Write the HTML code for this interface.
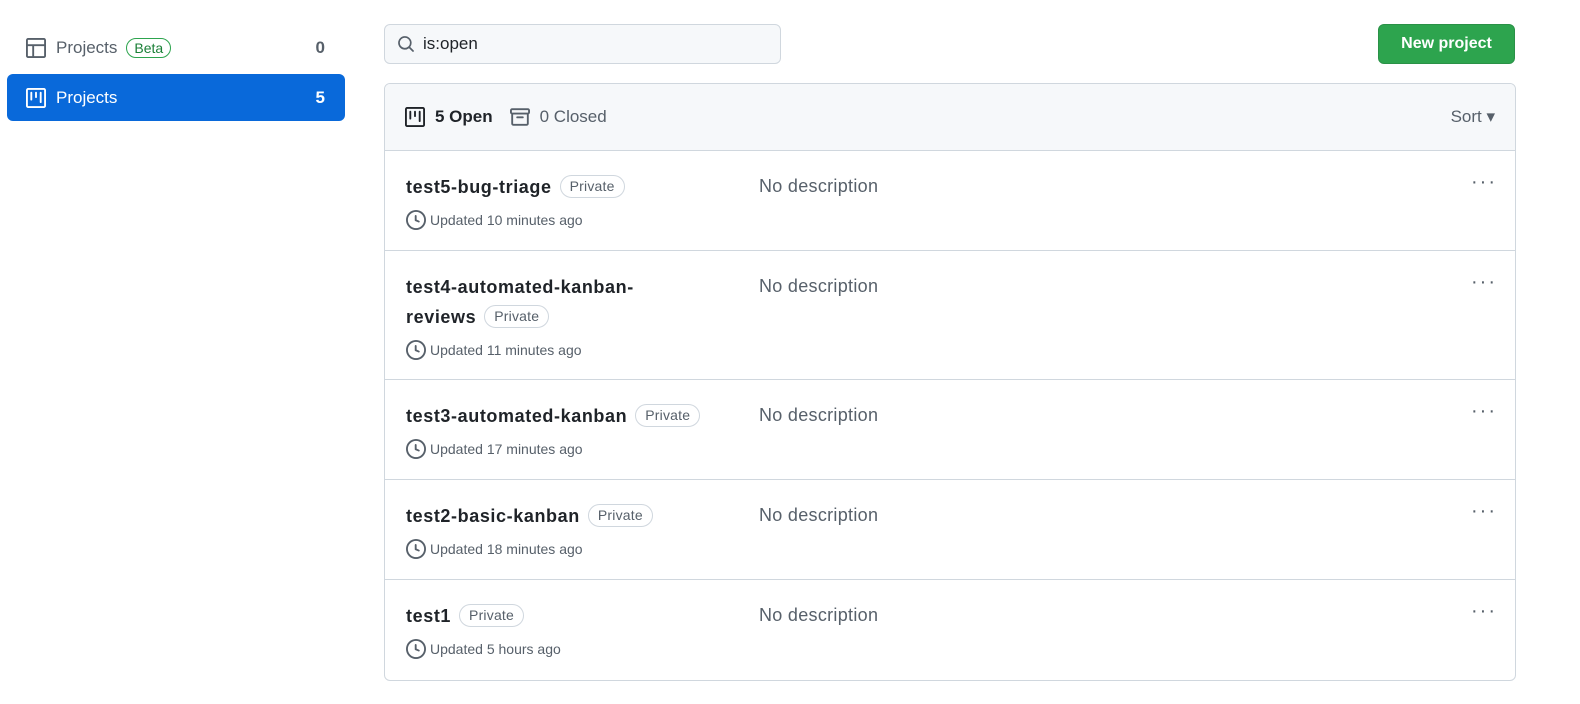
<!DOCTYPE html>
<html><head><style>
*{box-sizing:border-box;margin:0;padding:0}
body{width:1580px;height:704px;background:#fff;font-family:"Liberation Sans",sans-serif;color:#1f2328;position:relative;overflow:hidden}
.abs{position:absolute}
.side{left:7px;width:338px;height:47px;border-radius:6px;display:flex;align-items:center;padding-left:19px;font-size:17px}
.side .n{position:absolute;right:20px;font-weight:bold}
.beta{border:1px solid #2da44e;color:#1a7f37;border-radius:12px;font-size:14px;padding:1px 7px;margin-left:9px}
.search{left:384px;top:24px;width:397px;height:40px;border:1px solid #d0d7de;border-radius:6px;background:#f6f8fa;display:flex;align-items:center;padding-left:12px;font-size:17px;color:#1f2328}
.btn{left:1378px;top:24px;width:137px;height:40px;background:#2da44e;border:1px solid #2a9147;border-radius:6px;color:#fff;font-weight:bold;font-size:16px;display:flex;align-items:center;justify-content:center}
.box{left:384px;top:83px;width:1132px;height:598px;border:1px solid #d0d7de;border-radius:6px;overflow:hidden}
.hdr{height:67px;background:#f6f8fa;border-bottom:1px solid #d0d7de;display:flex;align-items:center;padding-left:20px;font-size:17px;position:relative}
.row{position:relative;border-bottom:1px solid #d0d7de}
.title{position:absolute;left:21px;font-size:18px;font-weight:bold;line-height:30px;width:340px;letter-spacing:0.6px}
.pv{display:inline-block;border:1px solid #d0d7de;border-radius:12px;font-size:14px;color:#57606a;padding:2px 9px;font-weight:normal;letter-spacing:0.2px;vertical-align:2px;margin-left:8px;line-height:17px}
.upd{position:absolute;left:21px;font-size:14px;color:#57606a;display:flex;align-items:center;gap:4px}
.desc{position:absolute;left:374px;font-size:18px;color:#57606a;letter-spacing:0.3px}
.dots{position:absolute;right:18px;font-size:20px;color:#57606a;letter-spacing:2px}
</style></head><body>
<div class="abs side" style="top:24px;color:#57606a">
<svg width="20" height="20" viewBox="0 0 16 16" fill="#57606a"><path d="M0 1.75C0 .78.78 0 1.750 0h12.5C15.22 0 16 .78 16 1.75v12.5A1.75 1.75 0 0 1 14.25 16H1.75A1.75 1.75 0 0 1 0 14.25ZM6.5 6.5v8h7.75a.25.25 0 0 0 .25-.25V6.5Zm8-1.5V1.75a.25.25 0 0 0-.25-.25H1.75a.25.25 0 0 0-.25.25V5Zm-13 1.5v7.750c0 .14.11.25.25.25H5v-8Z"/></svg>
<span style="margin-left:10px">Projects</span><span class="beta">Beta</span><span class="n" style="color:#57606a">0</span></div>
<div class="abs side" style="top:74px;background:#0969da;color:#fff">
<svg width="20" height="20" viewBox="0 0 16 16" fill="#fff"><path d="M1.75 0h12.5C15.22 0 16 .78 16 1.75v12.5A1.75 1.75 0 0 1 14.25 16H1.75A1.75 1.75 0 0 1 0 14.25V1.75C0 .78.78 0 1.75 0ZM1.5 1.75v12.5c0 .14.11.25.25.25h12.5a.25.25 0 0 0 .25-.25V1.75a.25.25 0 0 0-.25-.25H1.75a.25.25 0 0 0-.25.25ZM11.75 3a.75.75 0 0 1 .75.75v7.5a.75.75 0 0 1-1.5 0v-7.5a.75.75 0 0 1 .75-.75Zm-8.25.75a.75.75 0 0 1 1.5 0v5.5a.75.75 0 0 1-1.5 0ZM8 3a.75.75 0 0 1 .75.75v3.5a.75.75 0 0 1-1.5 0v-3.5A.75.75 0 0 1 8 3Z"/></svg>
<span style="margin-left:10px">Projects</span><span class="n">5</span></div>
<div class="abs search"><svg width="18" height="18" viewBox="0 0 16 16" fill="#57606a"><path d="M10.68 11.74a6 6 0 0 1-7.922-8.982 6 6 0 0 1 8.982 7.922l3.04 3.04a.749.749 0 1 1-1.06 1.06ZM11.5 7a4.499 4.499 0 1 0-8.997 0A4.499 4.499 0 0 0 11.5 7Z"/></svg><span style="margin-left:8px">is:open</span></div>
<div class="abs btn">New project</div>
<div class="abs box">
<div class="hdr">
<svg width="20" height="20" viewBox="0 0 16 16" fill="#1f2328"><path d="M1.75 0h12.5C15.22 0 16 .78 16 1.75v12.5A1.75 1.75 0 0 1 14.25 16H1.75A1.75 1.75 0 0 1 0 14.25V1.75C0 .78.78 0 1.75 0ZM1.5 1.75v12.5c0 .14.11.25.25.25h12.5a.25.25 0 0 0 .25-.25V1.75a.25.25 0 0 0-.25-.25H1.75a.25.25 0 0 0-.25.25ZM11.75 3a.75.75 0 0 1 .75.75v7.5a.75.75 0 0 1-1.5 0v-7.5a.75.75 0 0 1 .75-.75Zm-8.25.75a.75.75 0 0 1 1.5 0v5.5a.75.75 0 0 1-1.5 0ZM8 3a.75.75 0 0 1 .75.75v3.5a.75.75 0 0 1-1.5 0v-3.5A.75.75 0 0 1 8 3Z"/></svg>
<b style="margin-left:10px">5 Open</b>
<svg style="margin-left:17px" width="20" height="20" viewBox="0 0 16 16" fill="#57606a"><path d="M0 2.75C0 1.784.784 1 1.75 1h12.5c.966 0 1.75.784 1.75 1.75v1.5A1.75 1.75 0 0 1 15 5.826v7.424A1.75 1.75 0 0 1 13.25 15H2.75A1.75 1.75 0 0 1 1 13.25V5.826A1.75 1.75 0 0 1 0 4.25ZM2.5 5.95v7.3c0 .138.112.25.25.25h10.5a.25.25 0 0 0 .25-.25v-7.3ZM14.25 4.5a.25.25 0 0 0 .25-.25v-1.5a.25.25 0 0 0-.25-.25H1.75a.25.25 0 0 0-.25.25v1.5c0 .138.112.25.25.25Zm-8.5 3h4.5a.75.75 0 0 1 0 1.5h-4.5a.75.75 0 0 1 0-1.5Z"/></svg>
<span style="margin-left:10px;color:#57606a">0 Closed</span>
<span style="position:absolute;right:20px;color:#57606a">Sort ▾</span>
</div>
<div class="row" style="height:100px"><div class="title" style="top:21px">test5-bug-triage<span class="pv">Private</span></div><div class="upd" style="top:59px"><svg width="20" height="20" viewBox="0 0 16 16" fill="#57606a"><path d="M8 0a8 8 0 1 1 0 16A8 8 0 0 1 8 0ZM1.5 8a6.5 6.5 0 1 0 13 0 6.5 6.5 0 0 0-13 0Zm7-3.25v2.992l2.028.812a.75.75 0 0 1-.557 1.392l-2.5-1A.751.751 0 0 1 7 8.25v-3.5a.75.75 0 0 1 1.5 0Z"/></svg>Updated 10 minutes ago</div><div class="desc" style="top:25px">No description</div><div class="dots" style="top:20px">···</div></div>
<div class="row" style="height:129px"><div class="title" style="top:21px">test4-automated-kanban-<br>reviews<span class="pv">Private</span></div><div class="upd" style="top:89px"><svg width="20" height="20" viewBox="0 0 16 16" fill="#57606a"><path d="M8 0a8 8 0 1 1 0 16A8 8 0 0 1 8 0ZM1.5 8a6.5 6.5 0 1 0 13 0 6.5 6.5 0 0 0-13 0Zm7-3.25v2.992l2.028.812a.75.75 0 0 1-.557 1.392l-2.5-1A.751.751 0 0 1 7 8.25v-3.5a.75.75 0 0 1 1.5 0Z"/></svg>Updated 11 minutes ago</div><div class="desc" style="top:25px">No description</div><div class="dots" style="top:20px">···</div></div>
<div class="row" style="height:100px"><div class="title" style="top:21px">test3-automated-kanban<span class="pv">Private</span></div><div class="upd" style="top:59px"><svg width="20" height="20" viewBox="0 0 16 16" fill="#57606a"><path d="M8 0a8 8 0 1 1 0 16A8 8 0 0 1 8 0ZM1.5 8a6.5 6.5 0 1 0 13 0 6.5 6.5 0 0 0-13 0Zm7-3.25v2.992l2.028.812a.75.75 0 0 1-.557 1.392l-2.5-1A.751.751 0 0 1 7 8.25v-3.5a.75.75 0 0 1 1.5 0Z"/></svg>Updated 17 minutes ago</div><div class="desc" style="top:25px">No description</div><div class="dots" style="top:20px">···</div></div>
<div class="row" style="height:100px"><div class="title" style="top:21px">test2-basic-kanban<span class="pv">Private</span></div><div class="upd" style="top:59px"><svg width="20" height="20" viewBox="0 0 16 16" fill="#57606a"><path d="M8 0a8 8 0 1 1 0 16A8 8 0 0 1 8 0ZM1.5 8a6.5 6.5 0 1 0 13 0 6.5 6.5 0 0 0-13 0Zm7-3.25v2.992l2.028.812a.75.75 0 0 1-.557 1.392l-2.5-1A.751.751 0 0 1 7 8.25v-3.5a.75.75 0 0 1 1.5 0Z"/></svg>Updated 18 minutes ago</div><div class="desc" style="top:25px">No description</div><div class="dots" style="top:20px">···</div></div>
<div class="row" style="height:101px;border-bottom:none"><div class="title" style="top:21px">test1<span class="pv">Private</span></div><div class="upd" style="top:59px"><svg width="20" height="20" viewBox="0 0 16 16" fill="#57606a"><path d="M8 0a8 8 0 1 1 0 16A8 8 0 0 1 8 0ZM1.5 8a6.5 6.5 0 1 0 13 0 6.5 6.5 0 0 0-13 0Zm7-3.25v2.992l2.028.812a.75.75 0 0 1-.557 1.392l-2.5-1A.751.751 0 0 1 7 8.25v-3.5a.75.75 0 0 1 1.5 0Z"/></svg>Updated 5 hours ago</div><div class="desc" style="top:25px">No description</div><div class="dots" style="top:20px">···</div></div>
</div>
</body></html>
